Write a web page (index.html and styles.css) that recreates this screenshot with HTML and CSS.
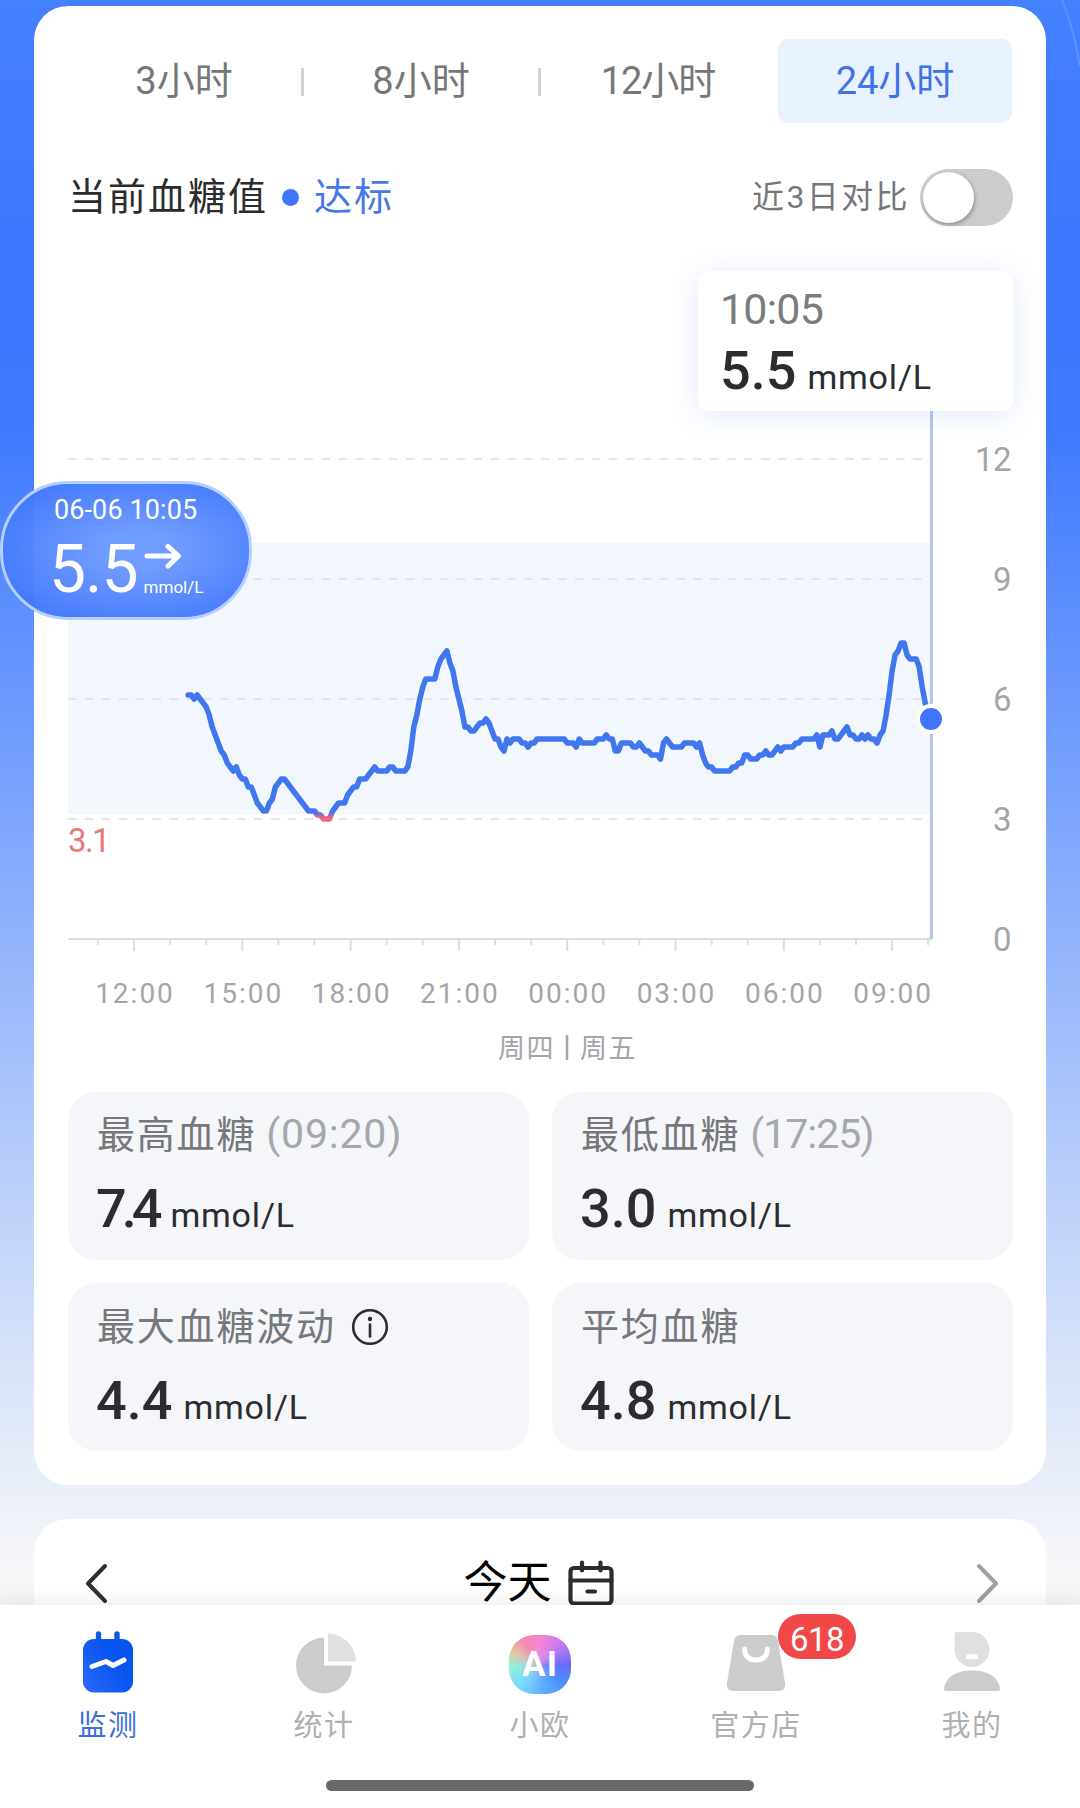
FILE: index.html
```html
<!DOCTYPE html>
<html lang="zh-CN">

<head>
    <meta charset="UTF-8">
    <meta name="viewport" content="width=device-width, initial-scale=1.0">
    <title>血糖监测</title>

    <link rel="stylesheet" href="styles.css">
</head>

<body>
    <main class="page">
        <svg class="bg-curve" width="30" height="80" viewBox="0 0 30 80"><path d="M12 0Q24 30 30 66" /></svg>

        <section class="card glucose-card">
            <div class="range-tabs">
                <button class="range-tab">3小时</button>
                <button class="range-tab">8小时</button>
                <button class="range-tab narrow">12小时</button>
                <button class="range-tab active">24小时</button>
            </div>

            <div class="status-row">
                <h2>当前血糖值</h2>
                <span class="dot"></span>
                <span class="status">达标</span>
                <span class="compare">近3日对比</span>
                <span class="toggle"><span class="knob"></span></span>
            </div>

            <div class="chart">
                <svg width="1012" height="850" viewBox="34 226 1012 850">
                    <defs>
                        <linearGradient id="line-color" gradientUnits="userSpaceOnUse" x1="0" y1="812" x2="0" y2="818">
                            <stop offset="0" stop-color="#4076ee" />
                            <stop offset="1" stop-color="#f0667a" />
                        </linearGradient>
                    </defs>
                    <rect class="target" x="68" y="543" width="864" height="271" />
                    <g id="grid"></g>
                    <line class="axis" x1="68" y1="939" x2="932" y2="939" />
                    <g id="ticks"></g>
                    <text class="low-label" x="68" y="852">3.1</text>
                    <text class="day-label" x="498" y="1058">周四</text>
                    <line class="day-split" x1="567" y1="1035" x2="567" y2="1060" />
                    <text class="day-label" x="580" y="1058">周五</text>
                    <polyline id="curve" />
                    <line class="cursor" x1="931.5" y1="400" x2="931.5" y2="939" />
                    <circle class="current" cx="931" cy="719" r="13" />
                </svg>
                <div class="tooltip">
                    <div class="tooltip-time">10:05</div>
                    <div class="value">5.5<span class="unit">mmol/L</span></div>
                </div>
            </div>

            <div class="stats">
                <div class="stat">
                    <div class="stat-label">最高血糖<span class="time">(09:20)</span></div>
                    <div class="value"><span class="tight">7.4</span><span class="unit">mmol/L</span></div>
                </div>
                <div class="stat">
                    <div class="stat-label">最低血糖<span class="time narrow">(17:25)</span></div>
                    <div class="value">3.0<span class="unit">mmol/L</span></div>
                </div>
                <div class="stat">
                    <div class="stat-label">最大血糖波动
                        <svg class="info" width="38" height="38" viewBox="0 0 38 38">
                            <circle cx="19" cy="19" r="16.8" />
                            <path d="M19 16.5v12" />
                            <circle class="info-dot" cx="19" cy="11" r="2.2" />
                        </svg>
                    </div>
                    <div class="value">4.4<span class="unit">mmol/L</span></div>
                </div>
                <div class="stat">
                    <div class="stat-label">平均血糖</div>
                    <div class="value">4.8<span class="unit">mmol/L</span></div>
                </div>
            </div>
        </section>

        <section class="card day-card">
            <svg class="arrow" width="24" height="42" viewBox="0 0 24 42"><path d="M20 3L3 20.5L20 38" /></svg>
            <div class="today">
                <span>今天</span>
                <svg class="calendar" width="46" height="46" viewBox="0 0 46 46">
                    <rect x="2.5" y="8" width="41" height="35.5" rx="3.5" />
                    <path d="M2.5 20.5h41M14 2.5v8M32.5 2.5v8M19.5 31.5h7.5" />
                </svg>
            </div>
            <svg class="arrow next" width="24" height="42" viewBox="0 0 24 42"><path d="M4 3L21 20.5L4 38" /></svg>
        </section>

        <!-- floating reading -->
        <div class="bubble">
            <div class="bubble-date">06-06 10:05</div>
            <div class="bubble-row">
                <span class="bubble-value">5.5</span>
                <div class="bubble-side">
                    <svg width="38" height="28" viewBox="0 0 38 28"><path d="M3 14H34M24 4.5L34.5 14L24 24" /></svg>
                    <span>mmol/L</span>
                </div>
            </div>
        </div>
    </main>

    <nav class="tabbar">
        <div class="tabs">
            <a class="tab active">
                <svg width="64" height="64" viewBox="0 0 64 64">
                    <defs>
                        <linearGradient id="monitor" x1="0" y1="1" x2="1" y2="0.2">
                            <stop offset="0" stop-color="#2c68fb" />
                            <stop offset="0.7" stop-color="#0754ee" />
                        </linearGradient>
                    </defs>
                    <path d="M22.5 4v10M41 4v10" stroke="#1457e6" stroke-width="5.4" stroke-linecap="round" />
                    <rect x="7" y="9" width="50" height="53.5" rx="11" fill="url(#monitor)" />
                    <path d="M16 36.5L30 31.5L37 35.5L48 30" fill="none" stroke="#fff" stroke-width="5" stroke-linecap="round" stroke-linejoin="round" />
                </svg>
                <span>监测</span>
            </a>
            <a class="tab">
                <svg width="64" height="64" viewBox="0 0 64 64">
                    <path d="M32 7.5A28 28 0 1 0 60 35.5H32Z" fill="#ccc" />
                    <path d="M36 3.5A28.5 28.5 0 0 1 64 31.5H36Z" fill="#e0e0e0" />
                </svg>
                <span>统计</span>
            </a>
            <a class="tab">
                <div class="ai">AI</div>
                <span>小欧</span>
            </a>
            <a class="tab">
                <svg width="64" height="64" viewBox="0 0 64 64">
                    <path d="M17 5H47Q53 5 54 11L61 53Q62 61 54 61H10Q2 61 3 53L10 11Q11 5 17 5Z" fill="#ccc" />
                    <path d="M20.5 19Q21 30 32 30T43.5 19" fill="none" stroke="#fff" stroke-width="5" stroke-linecap="round" />
                </svg>
                <span>官方店</span>
                <b class="badge">618</b>
            </a>
            <a class="tab">
                <svg width="64" height="64" viewBox="0 0 64 64">
                    <path d="M17 2H32A17.5 17.5 0 1 1 14.5 19.5V4.5Q14.5 2 17 2Z" fill="#e0e0e0" />
                    <path d="M28.5 26.8h7" stroke="#fff" stroke-width="5" stroke-linecap="round" />
                    <path d="M4 59C5 46 18 40.5 32 40.5S59 46 60 59Q60 61 58 61H6Q4 61 4 59Z" fill="#ccc" />
                </svg>
                <span>我的</span>
            </a>
        </div>
        <div class="home-bar"></div>
    </nav>

    <script src="chart.js"></script>
</body>

</html>
```

FILE: styles.css
```css
* {
    margin: 0;
    padding: 0;
    box-sizing: border-box;
}

body {
    width: 1080px;
    height: 1808px;
    overflow: hidden;
    display: flex;
    flex-direction: column;
    font-family: Roboto, "Noto Sans CJK SC", sans-serif;
    color: #2b2c2e;
    background: #ffffff;
}

.page {
    position: relative;
    flex: 1;
    min-height: 0;
    overflow: hidden;
    padding: 6px 34px 0;
    background: linear-gradient(#4481ff 0, #3b77ff 270px, #3e7aff 420px, #4a82ff 500px, #81a8fd 840px, #a9c3fb 1080px, #d9e4f9 1370px, #ebf0f9 1500px, #f5f6f8 1560px);
}

.bg-curve {
    position: absolute;
    top: 0;
    right: 0;
    fill: none;
    stroke: #5c91ff;
    stroke-width: 2;
}

.card {
    background: #ffffff;
    border-radius: 34px;
}

.glucose-card {
    height: 1479px;
    padding-top: 33px;
}

.range-tabs {
    display: grid;
    grid-template-columns: repeat(4, 234px);
    column-gap: 3px;
    margin: 0 33px;
}

.range-tab {
    position: relative;
    height: 84px;
    border: none;
    border-radius: 10px;
    background: none;
    font-family: inherit;
    font-size: 38px;
    line-height: 84px;
    color: #76777a;
}

.range-tab.narrow {
    letter-spacing: -1px;
}

/* divider between the inactive tabs */
.range-tab:nth-child(-n+2)::after {
    content: "";
    position: absolute;
    right: -3px;
    top: 29px;
    width: 3px;
    height: 28px;
    background: #d0d1d3;
}

.range-tab.active {
    background: #e8f2fe;
    color: #3f73e8;
}

.status-row {
    display: flex;
    align-items: center;
    height: 58px;
    margin: 45px 33px 0 34px;
}

.status-row h2,
.status {
    font-size: 38px;
    font-weight: 400;
    line-height: 50px;
    letter-spacing: 2px;
}

.dot {
    width: 17px;
    height: 17px;
    margin: 0 15px 0 14px;
    border-radius: 50%;
    background: #3d76fb;
}

.status {
    color: #4478ec;
}

.compare {
    margin-left: auto;
    font-size: 32px;
    line-height: 50px;
    letter-spacing: 2.4px;
    color: #76777a;
}

.toggle {
    width: 93px;
    height: 57px;
    margin-left: 10px;
    padding: 3px;
    border-radius: 29px;
    background: #cbcccd;
}

.knob {
    display: block;
    width: 51px;
    height: 51px;
    border-radius: 50%;
    background: #ffffff;
    box-shadow: 1px 2px 4px rgba(0, 0, 0, 0.3);
}

.chart {
    position: relative;
    height: 850px;
}

.chart svg {
    display: block;
}

.target {
    fill: #f2f7fe;
}

.grid-line {
    stroke: #dcdfe3;
    stroke-width: 1.5;
    stroke-dasharray: 8.6 8.3;
}

.axis,
.tick {
    stroke: #dddee0;
    stroke-width: 2;
}

.y-label {
    font-size: 33px;
    letter-spacing: -0.5px;
    fill: #a3a5a8;
    text-anchor: end;
}

.x-label {
    font-size: 28px;
    letter-spacing: 2px;
    fill: #a3a5a8;
    text-anchor: middle;
}

.day-label {
    font-size: 27px;
    letter-spacing: 1.5px;
    fill: #a3a5a8;
}

.day-split {
    stroke: #a3a5a8;
    stroke-width: 2.5;
}

.low-label {
    font-size: 33px;
    letter-spacing: -1.6px;
    fill: #e57878;
}

#curve {
    fill: none;
    stroke: url(#line-color);
    stroke-width: 5.5;
    stroke-linejoin: round;
    stroke-linecap: round;
}

.cursor {
    stroke: #b4c5f5;
    stroke-width: 3;
}

.current {
    fill: #3d76fb;
    stroke: #ffffff;
    stroke-width: 4;
}

.tooltip {
    position: absolute;
    left: 664px;
    top: 45px;
    width: 315px;
    height: 140px;
    padding: 13px 22px;
    border-radius: 10px;
    background: #ffffff;
    box-shadow: 0 4px 28px rgba(70, 120, 250, 0.16);
}

.tooltip-time {
    margin-bottom: 7px;
    font-size: 43px;
    line-height: 50px;
    letter-spacing: -0.8px;
    color: #7b7c7e;
}

.value {
    height: 60px;
    font-size: 54px;
    font-weight: 500;
    line-height: 60px;
}

.tight {
    margin-right: 2px;
    letter-spacing: -5px;
}

.unit {
    margin-left: 11px;
    font-size: 34px;
    font-weight: 400;
    line-height: 1;
    letter-spacing: 0.8px;
}

.stats {
    display: grid;
    grid-template-columns: 461px 461px;
    grid-auto-rows: 168px;
    gap: 23px;
    margin: 16px 33px 0 34px;
}

.stat {
    padding: 19px 28px;
    border-radius: 28px;
    background: #f5f6f9;
}

.stat:nth-child(-n+2) {
    padding-top: 17px;
}

.stat-label {
    display: flex;
    align-items: baseline;
    height: 50px;
    margin-bottom: 19px;
    padding-left: 1px;
    font-size: 38px;
    line-height: 50px;
    letter-spacing: 1.8px;
    color: #76777a;
}

.stat:nth-child(-n+2) .stat-label {
    margin-bottom: 20px;
}

.time {
    margin-left: 10px;
    font-size: 41px;
    letter-spacing: 0.8px;
    color: #a5a7ab;
}

.time.narrow {
    letter-spacing: -1px;
}

.info {
    align-self: center;
    margin: 0 0 0 15px;
    fill: none;
    stroke: #2b2c2e;
    stroke-width: 2.6;
    stroke-linecap: round;
}

.info .info-dot {
    fill: #2b2c2e;
    stroke: none;
}

.day-card {
    display: flex;
    justify-content: space-between;
    align-items: center;
    height: 200px;
    margin-top: 34px;
    padding: 0 47px 70px 51px;
}

.arrow {
    fill: none;
    stroke: #2f3032;
    stroke-width: 4;
    stroke-linecap: round;
    stroke-linejoin: round;
}

.arrow.next {
    stroke: #a0a0a0;
}

.today {
    display: flex;
    align-items: center;
    gap: 16px;
    margin: 0 7px 2px 0;
    font-size: 44px;
    line-height: 60px;
    color: #000000;
}

.calendar {
    fill: none;
    stroke: #2b2c2e;
    stroke-width: 4.2;
    stroke-linecap: round;
}

.bubble {
    position: absolute;
    left: 0;
    top: 481px;
    width: 252px;
    height: 139px;
    padding: 9px 0 0 51px;
    border: 3px solid #b5d0ff;
    border-radius: 68px;
    background: radial-gradient(ellipse at 55% 50%, rgba(108, 152, 255, 0.97) 20%, rgba(66, 120, 252, 0.97) 80%);
    color: #ffffff;
}

.bubble-date {
    font-size: 27px;
    line-height: 34px;
    letter-spacing: 0.1px;
}

.bubble-row {
    display: flex;
    margin-top: 4px;
}

.bubble-value {
    margin-left: -5px;
    font-size: 66px;
    line-height: 78px;
    letter-spacing: -1px;
}

.bubble-side {
    display: flex;
    flex-direction: column;
    margin-left: 6px;
    padding-top: 11px;
    font-size: 17px;
    line-height: 24px;
}

.bubble-side svg {
    margin-bottom: 5px;
    fill: none;
    stroke: #ffffff;
    stroke-width: 5;
    stroke-linecap: round;
    stroke-linejoin: round;
}

.tabbar {
    position: relative;
    height: 203px;
    background: #ffffff;
    box-shadow: 0 -2px 22px rgba(0, 0, 0, 0.09);
}

.tabs {
    display: grid;
    grid-template-columns: repeat(5, 1fr);
}

.tab {
    position: relative;
    display: flex;
    flex-direction: column;
    align-items: center;
    padding-top: 25px;
    height: 175px;
    font-size: 29px;
    line-height: 40px;
    letter-spacing: 1.5px;
    color: #b0b0b0;
}

.tab > span {
    margin-top: 12px;
}

.tab.active {
    color: #3c6fdc;
}

.ai {
    width: 62px;
    height: 59px;
    margin-top: 5px;
    border-radius: 25px;
    background:
        radial-gradient(circle at 45% 45%, rgba(200, 160, 240, 0.6), transparent 45%),
        conic-gradient(from 0deg at 50% 50%, #f884d0, #c77af0 45deg, #6a6cfa 90deg, #4a8cff 125deg, #63b4ff 180deg, #78dcfa 225deg, #8fefd8 265deg, #e0c8a0 295deg, #fa86b0 325deg, #f884d0);
    color: #ffffff;
    font-size: 35px;
    font-weight: 700;
    line-height: 59px;
    letter-spacing: 1px;
    text-align: center;
}

.ai + span {
    margin-top: 12px;
}

.badge {
    position: absolute;
    left: 130px;
    top: 9px;
    width: 78px;
    height: 45px;
    padding-top: 4px;
    border-radius: 23px;
    background: #f04848;
    color: #ffffff;
    font-size: 33px;
    font-weight: 400;
    line-height: 43px;
    letter-spacing: -0.5px;
    text-align: center;
}

.home-bar {
    width: 428px;
    height: 11px;
    margin: 0 auto;
    border-radius: 6px;
    background: #696969;
}
```

FILE: chart.js
```js
// readings every 5 minutes, starting at 13:30
const readings = [
    6.1, 6.1, 6.0, 6.1, 6.0, 5.9, 5.8, 5.6, 5.3, 5.1, 4.9, 4.7, 4.6, 4.4, 4.3, 4.2, 4.3, 4.1, 4.0, 4.0,
    3.8, 3.8, 3.6, 3.4, 3.3, 3.2, 3.2, 3.4, 3.5, 3.8, 3.9, 4.0, 4.0, 3.9, 3.8, 3.7, 3.6, 3.5, 3.4, 3.3,
    3.2, 3.2, 3.2, 3.1, 3.1, 3.0, 3.0, 3.0, 3.2, 3.3, 3.4, 3.4, 3.4, 3.6, 3.7, 3.8, 3.8, 4.0, 4.0, 4.0,
    4.1, 4.2, 4.3, 4.2, 4.2, 4.2, 4.2, 4.3, 4.3, 4.2, 4.2, 4.2, 4.2, 4.3, 4.7, 5.3, 5.6, 6.0, 6.3, 6.5,
    6.5, 6.5, 6.5, 6.8, 7.0, 7.1, 7.2, 6.9, 6.7, 6.3, 6.0, 5.7, 5.3, 5.3, 5.2, 5.2, 5.3, 5.4, 5.4, 5.5,
    5.4, 5.2, 5.0, 5.0, 4.8, 4.7, 5.0, 4.9, 5.0, 5.0, 5.0, 4.9, 4.9, 4.8, 4.9, 4.9, 5.0, 5.0, 5.0, 5.0,
    5.0, 5.0, 5.0, 5.0, 5.0, 5.0, 4.9, 4.9, 4.9, 4.8, 5.0, 4.9, 4.9, 4.9, 4.9, 4.9, 5.0, 5.0, 5.0, 5.1,
    5.0, 5.0, 4.7, 4.7, 4.9, 4.9, 4.9, 4.9, 4.8, 4.8, 4.9, 4.8, 4.7, 4.7, 4.6, 4.6, 4.6, 4.5, 4.9, 5.0,
    4.9, 4.8, 4.8, 4.8, 4.8, 4.9, 4.9, 4.9, 4.9, 4.8, 4.9, 4.6, 4.4, 4.3, 4.3, 4.2, 4.2, 4.2, 4.2, 4.2,
    4.2, 4.3, 4.3, 4.4, 4.4, 4.6, 4.6, 4.5, 4.5, 4.5, 4.6, 4.6, 4.7, 4.6, 4.6, 4.7, 4.8, 4.7, 4.8, 4.8,
    4.8, 4.8, 4.9, 4.9, 5.0, 5.0, 5.0, 5.0, 5.0, 5.1, 4.8, 5.1, 5.1, 5.1, 5.2, 5.0, 5.0, 5.1, 5.2, 5.3,
    5.1, 5.1, 5.0, 5.0, 5.1, 5.0, 5.1, 5.0, 5.0, 4.9, 5.1, 5.2, 5.6, 6.1, 6.7, 7.1, 7.2, 7.4, 7.4, 7.1,
    7.0, 7.0, 7.0, 6.8, 6.3, 5.9, 5.7, 5.5
];

const noon = 134;
const hourWidth = 36.1;
const yOf = value => 939 - value * 40;

document.getElementById("curve").setAttribute("points", readings.map((value, i) => {
    const x = noon + (1.5 + i / 12) * hourWidth;
    return `${x.toFixed(1)},${yOf(value).toFixed(1)}`;
}).join(" "));

let grid = "";
for (let value = 0; value <= 12; value += 3) {
    const y = yOf(value);
    if (value > 0) {
        grid += `<line class="grid-line" x1="68" y1="${y}" x2="932" y2="${y}" />`;
    }
    grid += `<text class="y-label" x="1011" y="${y + 12}">${value}</text>`;
}
document.getElementById("grid").innerHTML = grid;

let ticks = "";
for (let hour = 11; hour <= 34; hour++) {
    const x = noon + (hour - 12) * hourWidth;
    const major = hour % 3 === 0;
    ticks += `<line class="tick" x1="${x}" y1="939" x2="${x}" y2="${major ? 951 : 945}" />`;
    if (major) {
        const label = String(hour % 24).padStart(2, "0") + ":00";
        ticks += `<text class="x-label" x="${x + 1}" y="1003">${label}</text>`;
    }
}
document.getElementById("ticks").innerHTML = ticks;
```
